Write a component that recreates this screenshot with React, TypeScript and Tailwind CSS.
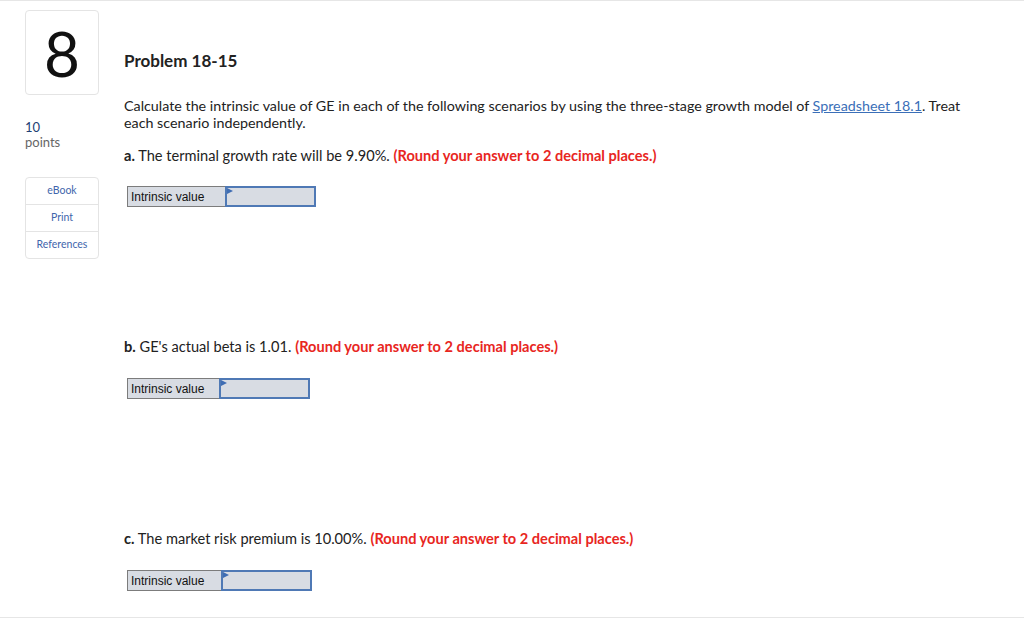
const font = { fontFamily: 'Lato, "Open Sans", sans-serif' };

function Answer({ labelW, inputW }: { labelW: string; inputW: string }) {
  return (
    <div className="flex h-[21px] ml-[3px]">
      <div
        className={`${labelW} border border-[#7c7c7c] border-r-0 bg-[#d8dce3] flex items-center pl-[3px] text-[12px] text-[#111]`}
        style={{ fontFamily: '"Liberation Sans", Arial, sans-serif' }}
      >
        Intrinsic value
      </div>
      <div className={`${inputW} relative border-2 border-[#4f79b5] bg-[#d8dce3]`}>
        <svg className="absolute left-0 top-0" width="6" height="7" viewBox="0 0 6 7">
          <path d="M0 0 L6 3 L0 6 Z" fill="#3f6db3" />
        </svg>
      </div>
    </div>
  );
}

function Question({ tag, text }: { tag: string; text: string }) {
  return (
    <p className="text-[14.6px] text-[#222] leading-[17px]">
      <span className="font-bold">{tag}</span> {text}{' '}
      <span className="font-bold text-[#e8261e]">(Round your answer to 2 decimal places.)</span>
    </p>
  );
}

export default function App() {
  return (
    <div className="w-[1024px] h-[619px] bg-white border-t border-[#e6e6e6] relative overflow-hidden" style={font}>
      <div className="flex">
        <aside className="w-[124px] shrink-0 pl-[25px] pt-[9px]">
          <div className="w-[74px] h-[85px] border border-[#e4e4e4] rounded-[4px] flex items-center justify-center">
            <span className="text-[62px] font-normal text-[#111] leading-none">8</span>
          </div>
          <div className="mt-[25px] text-[13px] leading-[15px]">
            <div className="text-[#1d3f74]">10</div>
            <div className="text-[#666]">points</div>
          </div>
          <div className="mt-[27px] w-[74px] border border-[#e4e4e4] rounded-[4px] text-[10.5px] text-[#3f66ac] text-center">
            <div className="h-[27px] flex items-center justify-center border-b border-[#e4e4e4]">eBook</div>
            <div className="h-[27px] flex items-center justify-center border-b border-[#e4e4e4]">Print</div>
            <div className="h-[26px] flex items-center justify-center">References</div>
          </div>
        </aside>
        <main className="flex-1 pr-[40px]">
          <h1 className="mt-[50px] text-[17px] font-bold text-[#222] leading-[20px]">Problem 18-15</h1>
          <p className="mt-[26px] text-[14.3px] text-[#222] leading-[17px]">
            Calculate the intrinsic value of GE in each of the following scenarios by using the three-stage growth model of{' '}
            <span className="text-[#3b6fb8] underline">Spreadsheet 18.1</span>. Treat each scenario independently.
          </p>
          <div className="mt-[16px]">
            <Question tag="a." text="The terminal growth rate will be 9.90%." />
          </div>
          <div className="mt-[22px]">
            <Answer labelW="w-[98px]" inputW="w-[91px]" />
          </div>
          <div className="mt-[131px]">
            <Question tag="b." text="GE's actual beta is 1.01." />
          </div>
          <div className="mt-[23px]">
            <Answer labelW="w-[92px]" inputW="w-[91px]" />
          </div>
          <div className="mt-[131px]">
            <Question tag="c." text="The market risk premium is 10.00%." />
          </div>
          <div className="mt-[23px]">
            <Answer labelW="w-[94px]" inputW="w-[91px]" />
          </div>
        </main>
      </div>
      <div className="absolute left-0 right-0 bottom-[1px] border-t border-[#e6e6e6]" />
    </div>
  );
}
